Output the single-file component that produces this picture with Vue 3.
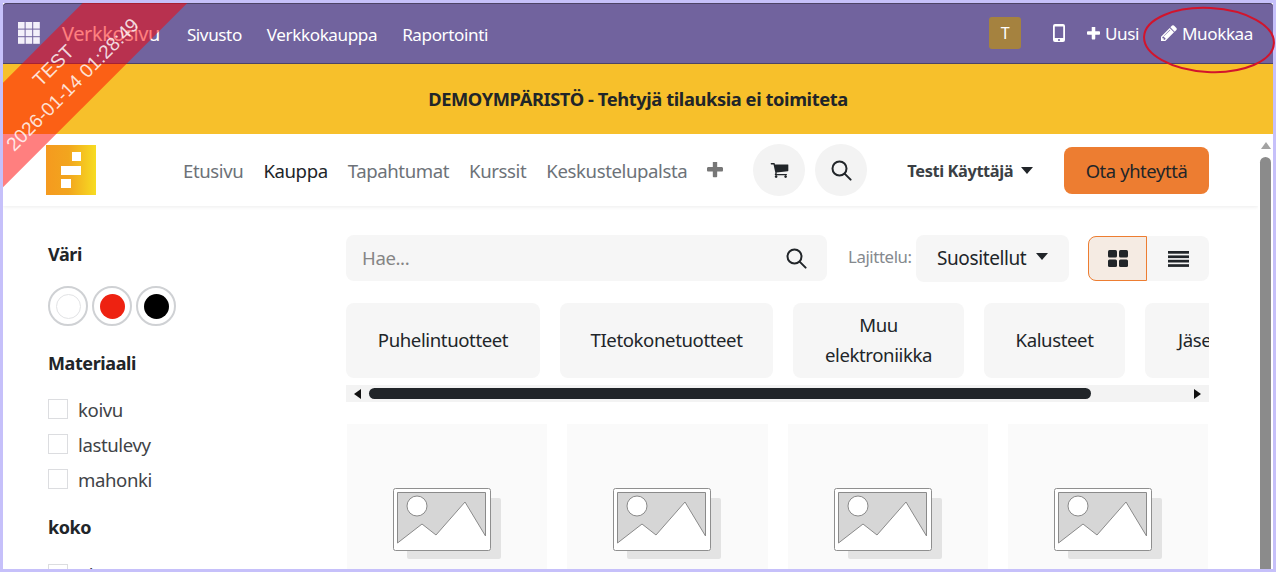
<script setup>
const topLinks = ['Sivusto', 'Verkkokauppa', 'Raportointi']
const siteLinks = ['Etusivu', 'Kauppa', 'Tapahtumat', 'Kurssit', 'Keskustelupalsta']
const materials = ['koivu', 'lastulevy', 'mahonki']
const categories = [
  { name: 'Puhelintuotteet', w: 194 },
  { name: 'TIetokonetuotteet', w: 213 },
  { name: 'Muu elektroniikka', w: 171 },
  { name: 'Kalusteet', w: 141 },
  { name: 'Jäsenyydet', w: 156 }
]
const products = [1, 2, 3, 4]
</script>

<template>
  <div class="page">
    <nav class="topbar">
      <svg class="apps" width="22" height="22" viewBox="0 0 22 22" fill="#f3f0fa">
        <g v-for="r in 3" :key="r">
          <rect v-for="c in 3" :key="c" :x="(c - 1) * 7.6" :y="(r - 1) * 7.6" width="6.6" height="6.6" />
        </g>
      </svg>
      <div class="toplinks">
        <a class="brand">Verkkosivu</a>
        <a v-for="l in topLinks" :key="l">{{ l }}</a>
      </div>
      <div class="topright">
        <span class="avatar">T</span>
        <svg class="phone" width="12" height="18" viewBox="0 0 12 18"><path fill="#fff" fill-rule="evenodd" d="M2 0h8a2 2 0 0 1 2 2v14a2 2 0 0 1-2 2H2a2 2 0 0 1-2-2V2a2 2 0 0 1 2-2zM1.800 2.600v11.400h8.400V2.600zM6 14.900a1.100 1.100 0 1 0 0 2.200 1.100 1.100 0 0 0 0-2.200z"/></svg>
        <span class="action">
          <svg width="14" height="14" viewBox="192 192 1408 1408"><path fill="#fff" d="M1600 736v192q0 40-28 68t-68 28h-416v416q0 40-28 68t-68 28h-192q-40 0-68-28t-28-68v-416h-416q-40 0-68-28t-28-68v-192q0-40 28-68t68-28h416v-416q0-40 28-68t68-28h192q40 0 68 28t28 68v416h416q40 0 68 28t28 68z"/></svg>
          Uusi
        </span>
        <span class="action edit">
          <svg width="16" height="16" viewBox="128 128 1536 1536"><path fill="#fff" d="M491 1536l91-91-235-235-91 91v107h128v128h107zm523-928q0-22-22-22-10 0-17 7l-542 542q-7 7-7 17 0 22 22 22 10 0 17-7l542-542q7-7 7-17zm-54-192l416 416-832 832h-416v-416zm683 96q0 53-37 90l-166 166-416-416 166-165q36-38 90-38 53 0 91 38l235 234q37 39 37 91z"/></svg>
          Muokkaa
        </span>
      </div>
    </nav>

    <div class="banner">DEMOYMPÄRISTÖ - Tehtyjä tilauksia ei toimiteta</div>

    <div class="viewport">
      <div class="content">
        <header class="sitehead">
          <div class="logo">
            <i class="s1"></i><i class="s2"></i><i class="s3"></i>
          </div>
          <div class="sitelinks">
            <a v-for="l in siteLinks" :key="l" :class="{ on: l === 'Kauppa' }">{{ l }}</a>
          </div>
          <svg class="more" width="16" height="16" viewBox="192 192 1408 1408"><path fill="#777" d="M1600 736v192q0 40-28 68t-68 28h-416v416q0 40-28 68t-68 28h-192q-40 0-68-28t-28-68v-416h-416q-40 0-68-28t-28-68v-192q0-40 28-68t68-28h416v-416q0-40 28-68t68-28h192q40 0 68 28t28 68v416h416q40 0 68 28t28 68z"/></svg>
          <span class="round cart">
            <svg width="19" height="19" viewBox="0 128 1792 1664"><path fill="#212529" d="M704 1536q0 52-38 90t-90 38-90-38-38-90 38-90 90-38 90 38 38 90zm896 0q0 52-38 90t-90 38-90-38-38-90 38-90 90-38 90 38 38 90zm128-1088v512q0 24-16.500 42.500t-40.500 21.500l-1044 122q13 60 13 70 0 16-24 64h920q26 0 45 19t19 45-19 45-45 19h-1024q-26 0-45-19t-19-45q0-11 8-31.500t16-36 21.500-40 15.500-29.500l-177-823h-204q-26 0-45-19t-19-45 19-45 45-19h256q16 0 28.500 6.500t19.500 15.500 13 24.500 8 26 5.500 29.500 4.500 26h1201q26 0 45 19t19 45z"/></svg>
          </span>
          <span class="round">
            <svg width="21" height="21" viewBox="0 0 21 21" fill="none" stroke="#212529" stroke-width="2"><circle cx="8.500" cy="8.500" r="7"/><path d="M13.600 13.600l6 6" stroke-linecap="round"/></svg>
          </span>
          <span class="user">Testi Käyttäjä<i class="caret"></i></span>
          <button class="cta">Ota yhteyttä</button>
        </header>

        <div class="shop">
          <aside class="filters">
            <h4>Väri</h4>
            <div class="swatches">
              <span class="sw"><i class="white"></i></span>
              <span class="sw"><i class="red"></i></span>
              <span class="sw"><i class="black"></i></span>
            </div>
            <h4 class="mat">Materiaali</h4>
            <label v-for="m in materials" :key="m" class="check"><i></i>{{ m }}</label>
            <h4 class="size">koko</h4>
            <label class="check"><i></i>ohut</label>
          </aside>

          <main class="products">
            <div class="tools">
              <div class="search">
                <span class="hint">Hae...</span>
                <svg width="21" height="21" viewBox="0 0 21 21" fill="none" stroke="#212529" stroke-width="2"><circle cx="8.500" cy="8.500" r="7"/><path d="M13.600 13.600l6 6" stroke-linecap="round"/></svg>
              </div>
              <span class="sortlabel">Lajittelu:</span>
              <div class="select">Suositellut<i class="caret big"></i></div>
              <div class="toggle">
                <span class="active">
                  <svg width="20" height="17" viewBox="0 0 20 17" fill="#212529"><rect width="9" height="7.600" rx="1.500"/><rect x="11" width="9" height="7.600" rx="1.500"/><rect y="9.400" width="9" height="7.600" rx="1.500"/><rect x="11" y="9.400" width="9" height="7.600" rx="1.500"/></svg>
                </span>
                <span>
                  <svg width="21" height="16" viewBox="0 0 21 16" fill="#212529"><rect width="21" height="2.700"/><rect y="4.400" width="21" height="2.700"/><rect y="8.800" width="21" height="2.700"/><rect y="13.200" width="21" height="2.700"/></svg>
                </span>
              </div>
            </div>

            <div class="cats">
              <a v-for="c in categories" :key="c.name" class="cat" :style="{ width: c.w + 'px' }">{{ c.name }}</a>
            </div>
            <div class="hscroll">
              <i class="arrow left"></i>
              <span class="thumb"></span>
              <i class="arrow right"></i>
            </div>

            <div class="grid">
              <div v-for="p in products" :key="p" class="card">
                <svg width="110" height="72" viewBox="0 0 110 72">
                  <rect x="14" y="10" width="94" height="61" rx="2" fill="#e3e3e3"/>
                  <rect x="0.500" y="0.500" width="97" height="62" rx="2" fill="#fff" stroke="#8f8f8f"/>
                  <path d="M4.500 4.500H92.500V48L72 14 43 47 29 36 4.500 55z" fill="#d6d6d6" stroke="#8a8a8a"/>
                  <circle cx="24" cy="18" r="10" fill="#fff" stroke="#8a8a8a"/>
                </svg>
              </div>
            </div>
          </main>
        </div>
      </div>

      <div class="vscroll">
        <i class="up"></i>
        <span class="vthumb"></span>
      </div>
    </div>

    <div class="ribbon">
      <div>TEST</div>
      <div>2026-01-14 01:28:49</div>
    </div>
    <div class="frame"></div>
    <svg class="ring" width="136" height="72" viewBox="0 0 136 72"><ellipse cx="68" cy="36" rx="65" ry="32" fill="none" stroke="#d2142c" stroke-width="2" transform="rotate(3 68 36)"/></svg>
  </div>
</template>

<style>
html, body { margin: 0; padding: 0; background: #fff; }
</style>

<style scoped>
.page {
  position: relative;
  width: 1276px;
  height: 572px;
  overflow: hidden;
  display: flex;
  flex-direction: column;
  box-sizing: border-box;
  padding: 3px 3px 0;
  font-family: "Noto Sans", "Liberation Sans", sans-serif;
  font-size: 18.6px;
  color: #212529;
  letter-spacing: -0.4px;
}
.frame {
  position: absolute;
  inset: 0;
  border: 3px solid #c6c0fa;
  pointer-events: none;
}
.ribbon {
  position: absolute;
  left: -87px;
  top: 38px;
  width: 300px;
  height: 74px;
  transform: rotate(-45deg);
  background: rgba(255, 0, 0, 0.5);
  color: rgba(255, 255, 255, 0.82);
  font-family: "Liberation Sans", sans-serif;
  font-size: 19.2px;
  line-height: 27px;
  letter-spacing: 0;
  text-align: center;
  padding-top: 10px;
  box-sizing: border-box;
  pointer-events: none;
}
.ring {
  position: absolute;
  left: 1141px;
  top: 4px;
}
.topbar {
  height: 60px;
  flex: none;
  box-sizing: content-box;
  background: #71639e;
  border-bottom: 1px solid #4d4366;
  box-shadow: inset 0 1px 0 #4d4366;
  border-radius: 4px 4px 0 0;
  display: flex;
  align-items: center;
  color: #fff;
  padding-left: 15px;
  padding-right: 20px;
  font-size: 17.1px;
}
.apps { flex: none; }
.toplinks {
  display: flex;
  gap: 25px;
  margin-left: 22px;
  align-items: baseline;
}
.brand { font-size: 20px; margin-right: 2px; }
.topright {
  margin-left: auto;
  display: flex;
  align-items: center;
}
.avatar {
  width: 32px;
  height: 32px;
  background: #a5823f;
  border-radius: 3px;
  display: flex;
  align-items: center;
  justify-content: center;
  font-size: 16px;
}
.phone { margin-left: 32px; }
.action {
  display: flex;
  align-items: center;
  gap: 5px;
  margin-left: 22px;
}
.action svg { flex: none; }
.action:not(.edit) svg { width: 13px; height: 13px; }
.banner {
  height: 70px;
  box-sizing: border-box;
  padding-bottom: 2px;
  flex: none;
  background: #f7c02b;
  display: flex;
  align-items: center;
  justify-content: center;
  font-weight: 700;
  font-size: 18.3px;
}
.viewport {
  flex: 1;
  min-height: 0;
  display: flex;
}
.content {
  flex: 1;
  min-width: 0;
  overflow: hidden;
}
.sitehead {
  height: 72px;
  box-sizing: border-box;
  display: flex;
  align-items: center;
  padding: 0 49px 0 43px;
  box-shadow: 0 1px 4px rgba(0, 0, 0, 0.08);
  position: relative;
}
.logo {
  width: 50px;
  height: 50px;
  flex: none;
  position: relative;
  background: linear-gradient(90deg, #f59a1f, #f2a51e 45%, #f7dc22);
}
.logo i { position: absolute; background: #fff; }
.s1 { left: 26px; top: 7px; width: 9px; height: 9px; }
.s2 { left: 15px; top: 21px; width: 20px; height: 9px; }
.s3 { left: 15px; top: 34px; width: 10px; height: 9px; }
.sitelinks {
  display: flex;
  gap: 20px;
  margin-left: 87px;
  color: #6d7278;
}
.sitelinks .on { color: #212529; }
.more { margin-left: 20px; flex: none; }
.round {
  width: 52px;
  height: 52px;
  flex: none;
  border-radius: 50%;
  background: #f3f3f3;
  display: flex;
  align-items: center;
  justify-content: center;
  margin-left: 10px;
}
.cart { margin-left: 30px; }
.user {
  margin-left: 40px;
  font-weight: 700;
  font-size: 16.4px;
  color: #3b3f44;
  display: flex;
  align-items: center;
}
.caret {
  display: inline-block;
  border-left: 6.5px solid transparent;
  border-right: 6.5px solid transparent;
  border-top: 7px solid #212529;
  margin-left: 8px;
}
.caret.big { margin-left: 10px; margin-top: -3px; }
.cta {
  margin-left: auto;
  width: 145px;
  height: 47px;
  border: 0;
  border-radius: 8px;
  background: #ed7d31;
  color: #212529;
  font: inherit;
  font-size: 18.4px;
  letter-spacing: inherit;
}
.shop {
  display: flex;
  padding: 29px 49px 0 45px;
}
.filters {
  width: 298px;
  flex: none;
  padding-top: 7px;
}
.filters h4 {
  margin: 0;
  font-size: 18px;
  line-height: 24px;
  font-weight: 700;
}
.swatches {
  display: flex;
  gap: 4px;
  margin-top: 20px;
}
.sw {
  width: 36px;
  height: 36px;
  border: 2px solid #cfd1d4;
  border-radius: 50%;
  display: flex;
  align-items: center;
  justify-content: center;
  background: #fff;
}
.sw i { width: 25px; height: 25px; border-radius: 50%; }
.sw .white { background: #fff; border: 1px solid #e2e3e5; box-sizing: border-box; }
.sw .red { background: #ee2211; }
.sw .black { background: #000; }
.filters .mat { margin-top: 25px; }
.mat + .check { margin-top: 24px; }
.filters .size { margin-top: 26px; }
.size + .check { margin-top: 25px; }
.check {
  display: flex;
  align-items: center;
  gap: 10px;
  height: 20px;
  margin-bottom: 15px;
  color: #3f4347;
}
.check i {
  width: 18px;
  height: 18px;
  border: 1px solid #dcdde0;
  flex: none;
}
.products {
  flex: 1;
  min-width: 0;
}
.tools {
  display: flex;
  align-items: flex-start;
  height: 47px;
}
.search {
  width: 481px;
  height: 46px;
  box-sizing: border-box;
  padding: 0 20px 0 16px;
  background: #f6f6f6;
  border-radius: 8px;
  display: flex;
  align-items: center;
  justify-content: space-between;
  color: #858585;
}
.hint { margin-top: -2px; }
.sortlabel {
  margin-left: 21px;
  font-size: 16.8px;
  line-height: 44px;
  color: #85898e;
  width: 68px;
  flex: none;
}
.select {
  width: 153px;
  height: 47px;
  box-sizing: border-box;
  padding-left: 21px;
  padding-bottom: 1px;
  background: #f6f6f6;
  border-radius: 8px;
  display: flex;
  align-items: center;
  font-size: 19px;
}
.toggle {
  display: flex;
  margin-left: 19px;
  margin-top: 1px;
  height: 45px;
  background: #f6f6f6;
  border-radius: 8px;
}
.toggle span {
  width: 62px;
  display: flex;
  align-items: center;
  justify-content: center;
}
.toggle .active {
  width: 59px;
  box-sizing: border-box;
  border: 1px solid #ed7d31;
  border-radius: 8px 0 0 8px;
  background: #f5ebe3;
}
.cats {
  display: flex;
  gap: 20px;
  margin-top: 21px;
  overflow: hidden;
}
.cat {
  flex: none;
  height: 75px;
  box-sizing: border-box;
  padding: 0 20px 2px;
  background: #f6f6f6;
  border-radius: 8px;
  display: flex;
  align-items: center;
  justify-content: center;
  text-align: center;
  line-height: 30px;
}
.hscroll {
  height: 17px;
  margin-top: 7px;
  background: #f3f3f3;
  display: flex;
  align-items: center;
  padding: 0 8px;
}
.thumb {
  width: 722px;
  height: 11px;
  border-radius: 6px;
  background: #212529;
  margin-left: 8px;
}
.arrow { width: 0; height: 0; border-top: 5px solid transparent; border-bottom: 5px solid transparent; }
.arrow.left { border-right: 7px solid #111; }
.arrow.right { border-left: 7px solid #111; margin-left: auto; }
.grid {
  display: grid;
  grid-template-columns: repeat(4, 1fr);
  gap: 20px;
  margin-top: 22px;
  padding: 0 1px;
}
.card {
  height: 160px;
  background: #fafafa;
  padding: 64px 0 0 46px;
  box-sizing: border-box;
}
.vscroll {
  width: 15px;
  flex: none;
  display: flex;
  flex-direction: column;
  align-items: center;
  background: #fff;
}
.up {
  width: 0;
  height: 0;
  border-left: 5px solid transparent;
  border-right: 5px solid transparent;
  border-bottom: 7px solid #a3a3a3;
  margin-top: 8px;
}
.vthumb {
  flex: 1;
  width: 11px;
  margin-top: 8px;
  background: #8b8b8b;
  border-radius: 6px 6px 0 0;
}
</style>
